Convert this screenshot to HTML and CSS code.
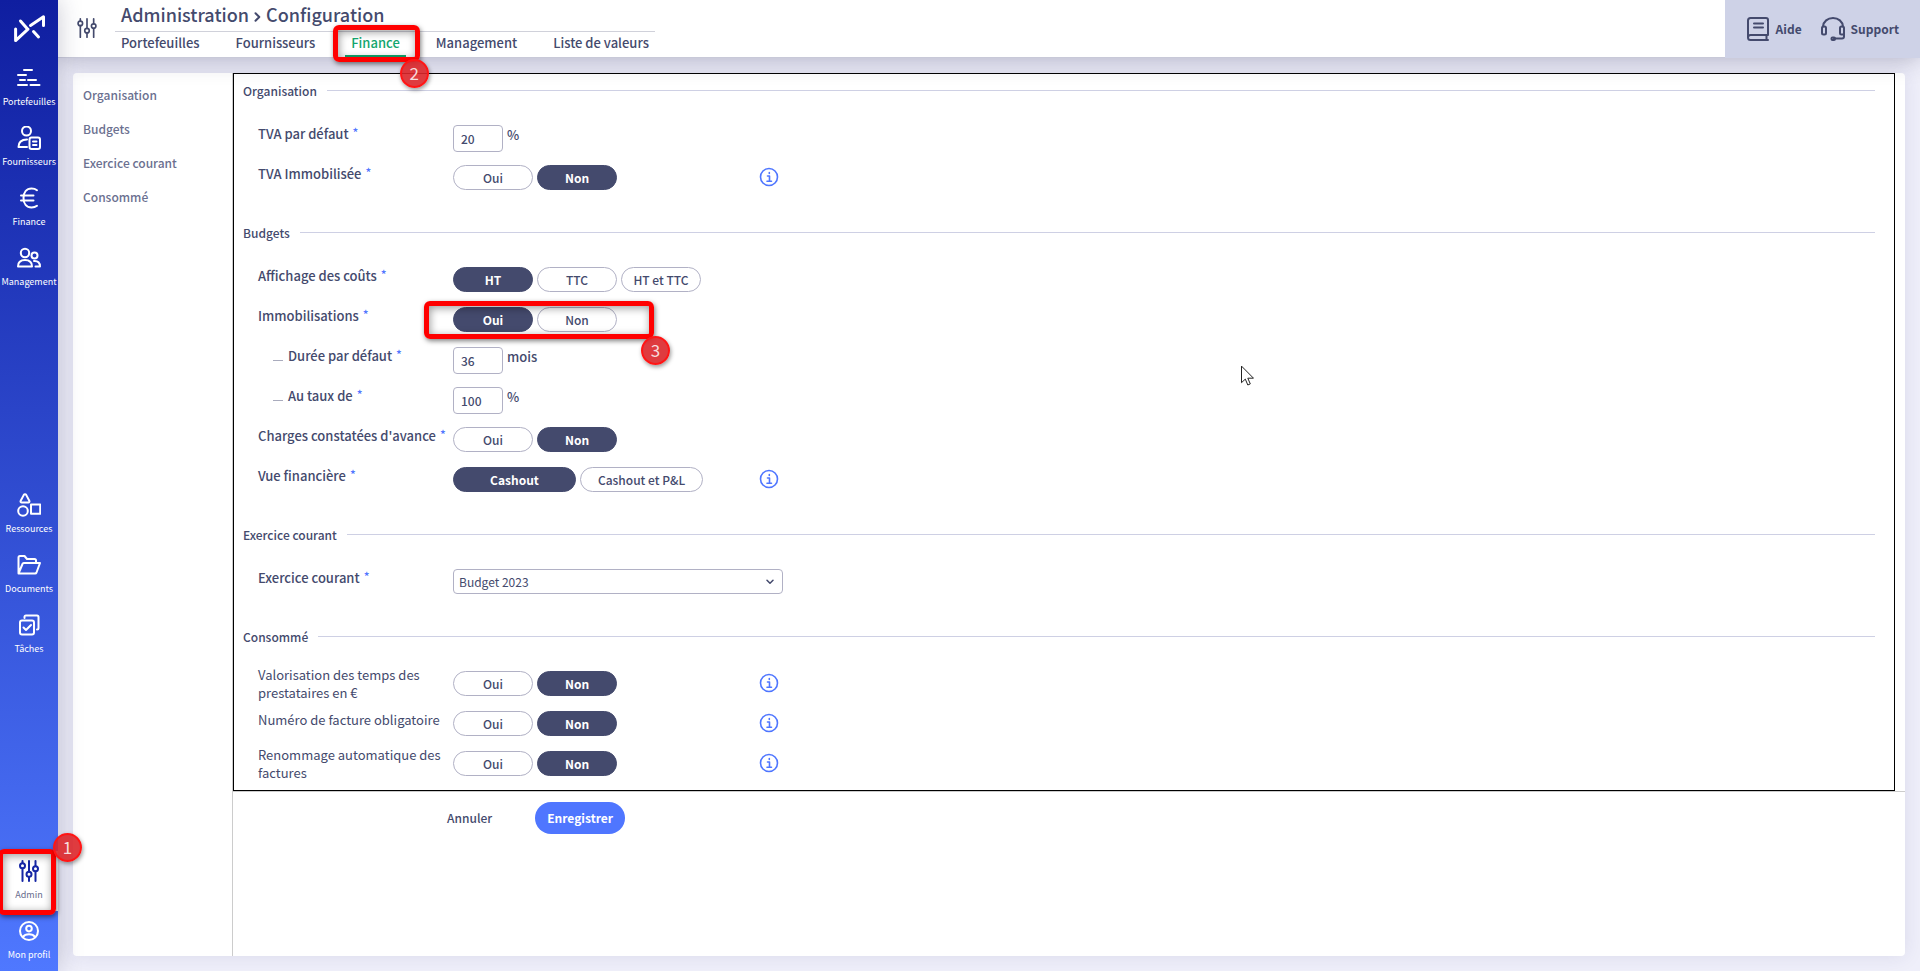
FILE: index.html
```html
<!DOCTYPE html>
<html lang="fr">
<head>
    <meta charset="UTF-8">
    <meta name="viewport" content="width=device-width, initial-scale=1.0">
    <title>Administration - Configuration</title>
    <link rel="stylesheet" href="styles.css">
</head>
<body>
    <nav class="sidebar">
        <a class="logo" href="#" aria-label="Accueil">
            <svg class="logo-mark" viewBox="0 0 34 30"><path d="M8.500 7l7 8M3.600 15v11.600L16 15.200M18.500 11.500L31.500 2.800v8.700M21.500 17.500l5 5.500"/></svg>
        </a>
        <div class="side-group">
            <a class="side-item" href="#">
                <svg class="icon" viewBox="0 0 24 24"><path d="M7 4h8M1 9h8M3 14h5M11 14h8M1 19h9M13.500 19h9"/></svg>
                <span>Portefeuilles</span>
            </a>
            <a class="side-item" href="#">
                <svg class="icon" viewBox="0 0 24 24"><circle cx="9.500" cy="5" r="4.500"/><path d="M10 13.500c-5 0-8.500 2.500-8.500 7.500h8.500"/><rect x="12.500" y="11.500" width="10.500" height="11.500" rx="2"/><path d="M16 15.500h3.500M16 19h3.500"/></svg>
                <span>Fournisseurs</span>
            </a>
            <a class="side-item" href="#">
                <svg class="icon" viewBox="0 0 24 24"><path d="M20 4.200C18.500 3 16.500 2.500 14.500 2.500c-5 0-8 4-8 9.500s3 9.500 8 9.500c2 0 4-.5 5.500-1.700M4 9.500h12.500M4 14.500h12.500"/></svg>
                <span>Finance</span>
            </a>
            <a class="side-item" href="#">
                <svg class="icon" viewBox="0 0 24 24"><circle cx="8" cy="7" r="4.200"/><path d="M1 20.500c0-4.500 2.500-6.500 7-6.500s7 2 7 6.500z"/><circle cx="17.500" cy="9.500" r="3"/><path d="M17 15c4-.3 6 1.800 6 5.500h-4.500"/></svg>
                <span>Management</span>
            </a>
        </div>
        <div class="side-group">
            <a class="side-item" href="#">
                <svg class="icon" viewBox="0 0 24 24"><path d="M8 1.200c.6 0 1 .4 1.300.9l3 5.600c.5 1-.1 1.800-1 1.800H4.700c-.9 0-1.500-.8-1-1.800l3-5.600c.3-.5.700-.9 1.300-.9z"/><circle cx="6" cy="18" r="4.800"/><rect x="14" y="11.500" width="9.200" height="9.200"/></svg>
                <span>Ressources</span>
            </a>
            <a class="side-item" href="#">
                <svg class="icon" viewBox="0 0 24 24"><path d="M1.500 20V4.500C1.500 3.500 2 3 3 3h4.500l2.500 3h7.500c1 0 1.500.5 1.500 1.500V10M1.500 20.500l4-9.500c.2-.6.500-1 1.200-1H23l-3.500 9.500c-.3.700-.7 1-1.300 1z"/></svg>
                <span>Documents</span>
            </a>
            <a class="side-item" href="#">
                <svg class="icon" viewBox="0 0 24 24"><rect x="3" y="7.500" width="14" height="14" rx="2"/><path d="M7.500 5V4c0-.8.500-1.500 1.500-1.500h11c1 0 1.500.7 1.500 1.500v11c0 1-.6 1.500-1.500 1.500M6.500 14.500l2.500 2.500 5-5"/></svg>
                <span>Tâches</span>
            </a>
        </div>
        <div class="side-group">
            <a class="side-item active" href="#">
                <svg class="icon" viewBox="0 0 24 24"><path d="M5.500 2v2M5.500 9.500V22M12 2v10.500M12 18v4M18.500 2v5M18.500 12.500V22"/><circle cx="5.500" cy="6.800" r="2.500"/><circle cx="12" cy="15.200" r="2.500"/><circle cx="18.500" cy="9.700" r="2.500"/></svg>
                <span>Admin</span>
                <i class="callout callout-admin"></i>
                <b class="step step-admin">1</b>
            </a>
            <a class="side-item" href="#">
                <svg class="icon" viewBox="0 0 24 24"><circle cx="12" cy="12" r="9"/><circle cx="12" cy="9.600" r="2.800"/><path d="M6 18c1.300-2 3.400-2.700 6-2.700s4.700.7 6 2.700"/></svg>
                <span>Mon profil</span>
            </a>
        </div>
    </nav>

    <div class="page">
        <header class="header">
            <svg class="header-icon" viewBox="0 0 24 24"><path d="M4 1v3M4 9v14M12 1v11.500M12 18v5M20 1v6M20 12.500V23"/><circle cx="4" cy="6.500" r="2.700"/><circle cx="12" cy="15.200" r="2.700"/><circle cx="20" cy="9.700" r="2.700"/></svg>
            <div class="header-main">
                <h1 class="title">Administration
                    <svg class="chevron" viewBox="0 0 7 10"><path d="M1.500 1.200L5.300 5 1.500 8.800"/></svg>
                    Configuration</h1>
                <div class="tabs">
                    <a class="tab" href="#">Portefeuilles</a>
                    <a class="tab" href="#">Fournisseurs</a>
                    <a class="tab active" href="#">Finance<i class="callout callout-tab"></i><b class="step step-tab">2</b></a>
                    <a class="tab" href="#">Management</a>
                    <a class="tab" href="#">Liste de valeurs</a>
                </div>
            </div>
            <div class="help">
                <a class="help-link" href="#">
                    <svg class="help-icon" viewBox="0 0 24 24"><path d="M22 18V3c0-1.200-.8-2-2-2H4.500C3 1 2 2 2 3.500v17C2 22 3 23 4.500 23H22M2 20.500C2 18.800 3 18 4.500 18H22M20.500 18v5M8 6.500h9M8 10.500h9"/></svg>
                    Aide
                </a>
                <a class="help-link" href="#">
                    <svg class="help-icon" viewBox="0 0 24 24"><path d="M2 9.500C2.500 4.500 6.500 1 12 1s9.500 3.500 10 8.500"/><rect x="1" y="9.500" width="4" height="8" rx="1.500"/><rect x="19" y="9.500" width="4" height="8" rx="1.500"/><path d="M23 16v3.500c0 1.500-1 2-2 2h-8"/><rect x="10.500" y="20.500" width="3.500" height="2.500" rx="1"/></svg>
                    Support
                </a>
            </div>
        </header>

        <main class="panel">
            <nav class="section-nav">
                <a href="#organisation">Organisation</a>
                <a href="#budgets">Budgets</a>
                <a href="#exercice">Exercice courant</a>
                <a href="#consomme">Consommé</a>
            </nav>
            <form class="settings">
                <div class="settings-body" tabindex="0">
                    <section class="section" id="organisation">
                        <h2 class="section-title">Organisation</h2>
                        <div class="row">
                            <label class="label required" for="tva">TVA par défaut</label>
                            <div class="control"><input class="number" id="tva" type="text" value="20"><span class="unit">%</span></div>
                        </div>
                        <div class="row">
                            <span class="label required" id="l-tva-immo">TVA Immobilisée</span>
                            <div class="control" role="radiogroup" aria-labelledby="l-tva-immo">
                                <label class="pill"><input type="radio" name="tva-immo">Oui</label>
                                <label class="pill"><input type="radio" name="tva-immo" checked>Non</label>
                            </div>
                            <button class="info" type="button" aria-label="Information"><svg viewBox="0 0 20 20"><circle cx="10" cy="10" r="8.500"/><path d="M8.500 9h2v5M8 14.200h4.500M10.300 5.500v1"/></svg></button>
                        </div>
                    </section>

                    <section class="section" id="budgets">
                        <h2 class="section-title">Budgets</h2>
                        <div class="row">
                            <span class="label required" id="l-couts">Affichage des coûts</span>
                            <div class="control" role="radiogroup" aria-labelledby="l-couts">
                                <label class="pill"><input type="radio" name="couts" checked>HT</label>
                                <label class="pill"><input type="radio" name="couts">TTC</label>
                                <label class="pill"><input type="radio" name="couts">HT et TTC</label>
                            </div>
                        </div>
                        <div class="row">
                            <span class="label required" id="l-immo">Immobilisations</span>
                            <div class="control" role="radiogroup" aria-labelledby="l-immo">
                                <label class="pill"><input type="radio" name="immo" checked>Oui</label>
                                <label class="pill"><input type="radio" name="immo">Non</label>
                                <i class="callout callout-immo"></i>
                                <b class="step step-immo">3</b>
                            </div>
                        </div>
                        <div class="row">
                            <label class="label sub required" for="duree">Durée par défaut</label>
                            <div class="control"><input class="number" id="duree" type="text" value="36"><span class="unit">mois</span></div>
                        </div>
                        <div class="row">
                            <label class="label sub required" for="taux">Au taux de</label>
                            <div class="control"><input class="number" id="taux" type="text" value="100"><span class="unit">%</span></div>
                        </div>
                        <div class="row">
                            <span class="label required" id="l-cca">Charges constatées d'avance</span>
                            <div class="control" role="radiogroup" aria-labelledby="l-cca">
                                <label class="pill"><input type="radio" name="cca">Oui</label>
                                <label class="pill"><input type="radio" name="cca" checked>Non</label>
                            </div>
                        </div>
                        <div class="row">
                            <span class="label required" id="l-vue">Vue financière</span>
                            <div class="control" role="radiogroup" aria-labelledby="l-vue">
                                <label class="pill large"><input type="radio" name="vue" checked>Cashout</label>
                                <label class="pill large"><input type="radio" name="vue">Cashout et P&amp;L</label>
                            </div>
                            <button class="info" type="button" aria-label="Information"><svg viewBox="0 0 20 20"><circle cx="10" cy="10" r="8.500"/><path d="M8.500 9h2v5M8 14.200h4.500M10.300 5.500v1"/></svg></button>
                        </div>
                    </section>

                    <section class="section" id="exercice">
                        <h2 class="section-title">Exercice courant</h2>
                        <div class="row">
                            <label class="label required" for="budget">Exercice courant</label>
                            <div class="control wide">
                                <select class="select" id="budget"><option>Budget 2023</option></select>
                                <svg class="select-arrow" viewBox="0 0 8 6"><path d="M1 1.200l3 3 3-3"/></svg>
                            </div>
                        </div>
                    </section>

                    <section class="section" id="consomme">
                        <h2 class="section-title">Consommé</h2>
                        <div class="row">
                            <span class="label light two-lines" id="l-temps">Valorisation des temps des prestataires en €</span>
                            <div class="control" role="radiogroup" aria-labelledby="l-temps">
                                <label class="pill"><input type="radio" name="temps">Oui</label>
                                <label class="pill"><input type="radio" name="temps" checked>Non</label>
                            </div>
                            <button class="info" type="button" aria-label="Information"><svg viewBox="0 0 20 20"><circle cx="10" cy="10" r="8.500"/><path d="M8.500 9h2v5M8 14.200h4.500M10.300 5.500v1"/></svg></button>
                        </div>
                        <div class="row">
                            <span class="label light" id="l-num">Numéro de facture obligatoire</span>
                            <div class="control" role="radiogroup" aria-labelledby="l-num">
                                <label class="pill"><input type="radio" name="num">Oui</label>
                                <label class="pill"><input type="radio" name="num" checked>Non</label>
                            </div>
                            <button class="info" type="button" aria-label="Information"><svg viewBox="0 0 20 20"><circle cx="10" cy="10" r="8.500"/><path d="M8.500 9h2v5M8 14.200h4.500M10.300 5.500v1"/></svg></button>
                        </div>
                        <div class="row">
                            <span class="label light two-lines" id="l-renom">Renommage automatique des factures</span>
                            <div class="control" role="radiogroup" aria-labelledby="l-renom">
                                <label class="pill"><input type="radio" name="renom">Oui</label>
                                <label class="pill"><input type="radio" name="renom" checked>Non</label>
                            </div>
                            <button class="info" type="button" aria-label="Information"><svg viewBox="0 0 20 20"><circle cx="10" cy="10" r="8.500"/><path d="M8.500 9h2v5M8 14.200h4.500M10.300 5.500v1"/></svg></button>
                        </div>
                    </section>
                </div>
                <div class="actions">
                    <button class="btn" type="reset">Annuler</button>
                    <button class="btn btn-primary" type="submit">Enregistrer</button>
                </div>
            </form>
        </main>
    </div>

    <svg class="cursor" viewBox="0 0 13 20"><path d="M.5.500v16.200l3.800-3.600 2.500 5.900 2.500-1.100-2.500-5.700h5.300z"/></svg>
</body>
</html>
```
FILE: styles.css
```css
* {
    margin: 0;
    padding: 0;
    box-sizing: border-box;
}

body {
    display: flex;
    min-height: 100vh;
    font-family: "Noto Sans CJK SC", "Noto Sans", sans-serif;
    font-size: 13px;
    font-weight: 500;
    line-height: 18px;
    color: #444a6d;
    background: #efeffa;
}

a {
    color: inherit;
    text-decoration: none;
}

svg {
    fill: none;
    stroke: currentColor;
    stroke-width: 2;
    stroke-linecap: round;
    stroke-linejoin: round;
}

/* Sidebar */
.sidebar {
    position: relative;
    z-index: 2;
    flex: none;
    display: flex;
    flex-direction: column;
    justify-content: space-between;
    width: 58px;
    color: #fff;
    background: linear-gradient(to bottom, #0f1ea0 0%, #4f78ff 100%);
    box-shadow: 0 0 24px rgba(40, 40, 80, 0.25);
}

.logo {
    display: flex;
    align-items: center;
    justify-content: center;
    height: 58px;
    margin-bottom: -186px;
}

.logo-mark {
    width: 34px;
    height: 30px;
    stroke-width: 3;
}

.side-item {
    position: relative;
    display: flex;
    flex-direction: column;
    align-items: center;
    gap: 3px;
    height: 60px;
    padding-top: 8px;
    font-size: 9px;
    font-weight: 400;
    white-space: nowrap;
}

.side-item.active {
    color: #666b8c;
    background: #fff;
}

.side-item.active .icon {
    color: #1526a5;
}

.icon {
    width: 24px;
    height: 24px;
}

/* Header */
.page {
    flex: 1;
    display: flex;
    flex-direction: column;
    min-width: 0;
}

.header {
    position: relative;
    z-index: 1;
    display: flex;
    height: 58px;
    background: #fff;
    border-bottom: 1px solid #c8c9d8;
    box-shadow: 0 0 24px rgba(40, 40, 80, 0.35);
}

.header-icon {
    width: 20px;
    height: 20px;
    margin: 18px 18px 0 19px;
}

.title {
    height: 32px;
    padding: 0 6px;
    border-bottom: 1px solid #d0d1da;
    font-size: 18px;
    font-weight: 500;
    line-height: 28px;
}

.chevron {
    width: 7px;
    height: 10px;
    margin: 0 1px;
}

.tabs {
    display: flex;
    gap: 24px;
}

.tab {
    position: relative;
    height: 25px;
    padding: 0 6px;
    line-height: 22px;
}

.tab.active {
    color: #13a66e;
    border-bottom: 2px solid #13a66e;
}

.help {
    display: flex;
    align-items: center;
    gap: 19px;
    height: 58px;
    margin-left: auto;
    padding: 0 21px;
    background: #ced2e7;
}

.help-link {
    display: flex;
    align-items: center;
    gap: 6px;
    font-size: 12px;
    font-weight: 700;
}

.help-icon {
    width: 24px;
    height: 24px;
}

/* Panel */
.panel {
    flex: 1;
    display: flex;
    margin: 15px;
    border-radius: 4px;
    background: #fff;
    box-shadow: 0 0 20px rgba(40, 40, 100, 0.1);
}

.section-nav {
    display: flex;
    flex-direction: column;
    gap: 16px;
    width: 160px;
    padding: 13px 10px;
    border-right: 1px solid #ccc;
    font-size: 12px;
    color: #6b7090;
}

.settings {
    flex: 1;
}

.settings-body {
    margin-right: 10px;
    padding: 7px 19px 0 9px;
    border: 1px solid #000;
}

.section {
    margin-bottom: 18px;
}

.section:last-child {
    margin-bottom: -1px;
}

.section-title {
    display: flex;
    align-items: center;
    gap: 10px;
    margin-bottom: 25px;
    font-size: 12px;
    font-weight: 500;
    line-height: 19px;
}

.section-title::after {
    content: "";
    flex: 1;
    height: 1px;
    background: #ced0e4;
}

.row {
    display: grid;
    grid-template-columns: 195px 306px 1fr;
    align-items: start;
    height: 40px;
    padding-left: 15px;
}

.label.light {
    padding-right: 10px;
    font-weight: 400;
}

.label.two-lines {
    margin-top: -5px;
}

.required::after {
    content: "*";
    margin-left: 4px;
    color: #4f76ff;
    font-size: 12px;
    vertical-align: 2px;
    line-height: 1;
}

.sub::before {
    content: "";
    display: inline-block;
    width: 10px;
    height: 1px;
    margin: 0 5px 0 15px;
    background: #a9abbd;
}

.control {
    position: relative;
    display: flex;
    gap: 4px;
}

.control.wide {
    grid-column: 2 / -1;
    width: 330px;
}

.number {
    width: 50px;
    height: 27px;
    padding: 0 7px;
    border: 1px solid #b1b1c5;
    border-radius: 4px;
    font: inherit;
    font-size: 12px;
    color: inherit;
}

.unit {
    line-height: 20px;
}

.pill {
    display: flex;
    align-items: center;
    justify-content: center;
    width: 80px;
    height: 25px;
    border: 1px solid #b1b1c5;
    border-radius: 13px;
    font-size: 12px;
    cursor: pointer;
}

.pill.large {
    width: 123px;
}

.pill input {
    position: absolute;
    opacity: 0;
}

.pill:has(input:checked) {
    border-color: #444a6d;
    background: #444a6d;
    color: #fff;
    font-weight: 700;
}

.info {
    width: 20px;
    height: 20px;
    margin-top: 2px;
    border: none;
    background: none;
    color: #4f76ff;
    cursor: pointer;
}

.info svg {
    display: block;
    stroke-width: 1.600;
}

.select {
    width: 100%;
    height: 25px;
    padding: 0 5px;
    border: 1px solid #b1b1c5;
    border-radius: 4px;
    appearance: none;
    background: #fff;
    font: inherit;
    font-size: 12px;
    font-weight: 400;
    color: inherit;
}

.select-arrow {
    position: absolute;
    top: 10px;
    right: 9px;
    width: 8px;
    height: 6px;
    stroke-width: 1.500;
    pointer-events: none;
}

.actions {
    display: flex;
    gap: 25px;
    padding: 10px 196px;
    border-top: 1px solid #ccc;
}

.btn {
    height: 32px;
    padding: 0 18px;
    border: none;
    border-radius: 16px;
    background: none;
    font: inherit;
    font-size: 12px;
    color: inherit;
    cursor: pointer;
}

.btn-primary {
    padding: 0 12px;
    background: #4f76ff;
    color: #fff;
    font-weight: 700;
}

/* Tutorial callouts */
.callout {
    position: absolute;
    z-index: 3;
    border: 5px solid #f00;
    border-radius: 6px;
    box-shadow: 1px 2px 5px rgba(0, 0, 0, 0.5), inset 1px 2px 8px rgba(0, 0, 0, 0.4);
}

.callout-admin {
    inset: -2px 2px -4px -2px;
}

.callout-tab {
    inset: -7px -14px -7px -12px;
}

.callout-immo {
    top: -6px;
    left: -29px;
    width: 230px;
    height: 38px;
}

.step {
    position: absolute;
    z-index: 4;
    width: 29px;
    height: 29px;
    border: 2px solid #ff1515;
    border-radius: 50%;
    background: rgba(220, 38, 42, 0.9);
    box-shadow: 1px 2px 4px rgba(0, 0, 0, 0.4);
    color: #f6dcdc;
    font-size: 17px;
    font-weight: 400;
    line-height: 24px;
    text-align: center;
}

.step-admin {
    top: -18px;
    left: 53px;
}

.step-tab {
    top: 27px;
    right: -23px;
}

.step-immo {
    top: 29px;
    left: 188px;
}

.cursor {
    position: absolute;
    top: 366px;
    left: 1241px;
    width: 13px;
    height: 20px;
    fill: #fff;
    stroke: #222;
    stroke-width: 1;
}
```
